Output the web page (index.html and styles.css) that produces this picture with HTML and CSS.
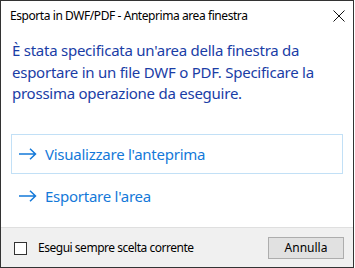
FILE: index.html
```html
<!DOCTYPE html>
<html lang="it">
<head>
    <meta charset="UTF-8">
    <title>Esporta in DWF/PDF - Anteprima area finestra</title>
    <link rel="stylesheet" href="styles.css">
</head>
<body>
    <div class="dialog">
        <div class="titlebar">
            <span class="title">Esporta in DWF/PDF - Anteprima area finestra</span>
            <svg class="close" width="12" height="12" viewBox="0 0 12 12">
                <path d="M0.5 0.5 L11.5 11.5 M11.5 0.5 L0.5 11.5" stroke="#111" stroke-width="1" fill="none"/>
            </svg>
        </div>

        <div class="content">
            <p class="instruction">È stata specificata un'area della finestra da esportare in un file DWF o PDF. Specificare la prossima operazione da eseguire.</p>

            <div class="links">
                <div class="command focused">
                    <svg class="arrow" width="18" height="12" viewBox="0 0 18 12">
                        <path d="M0 6 H16.5 M11 0.7 L16.5 6 L11 11.3" stroke="#1479d9" stroke-width="1.5" fill="none"/>
                    </svg>
                    <span>Visualizzare l'anteprima</span>
                </div>
                <div class="command">
                    <svg class="arrow" width="18" height="12" viewBox="0 0 18 12">
                        <path d="M0 6 H16.5 M11 0.7 L16.5 6 L11 11.3" stroke="#1479d9" stroke-width="1.5" fill="none"/>
                    </svg>
                    <span>Esportare l'area</span>
                </div>
            </div>
        </div>

        <div class="footer">
            <label class="check">
                <span class="box"></span>
                <span>Esegui sempre scelta corrente</span>
            </label>
            <button class="cancel">Annulla</button>
        </div>
    </div>
</body>
</html>
```

FILE: styles.css
```css
body {
    margin: 0;
    background-color: white;
    font-family: "Noto Sans", "Open Sans", sans-serif;
}
.dialog {
    width: 352px;
    height: 266px;
    border: 1px solid #333;
    background-color: white;
    display: flex;
    flex-direction: column;
}
.titlebar {
    height: 30px;
    display: flex;
    align-items: center;
    justify-content: space-between;
    padding: 0 8px 0 9px;
    font-size: 12px;
    color: #000;
}
.title {
    letter-spacing: -0.43px;
    margin-top: -1px;
}
.content {
    flex: 1;
    padding: 9px 10px 0 10px;
}
.instruction {
    margin: 0 0 0 1px;
    font-size: 15px;
    line-height: 21.5px;
    color: #1a3da6;
    letter-spacing: -0.25px;
}
.links {
    margin-top: 29px;
    display: flex;
    flex-direction: column;
    gap: 2px;
}
.command {
    height: 38px;
    border: 1px solid transparent;
    display: flex;
    align-items: center;
    gap: 8px;
    padding-left: 7px;
    color: #1479d9;
    font-size: 15px;
    letter-spacing: -0.25px;
}
.command.focused {
    border-color: #c2e0f6;
}
.arrow {
    flex-shrink: 0;
}
.footer {
    height: 39px;
    background-color: #f0f0f0;
    border-top: 1px solid #dfdfdf;
    display: flex;
    align-items: center;
    justify-content: space-between;
    padding: 0 9px 0 13px;
    font-size: 12px;
}
.check {
    display: flex;
    align-items: center;
    gap: 11px;
    color: #000;
    letter-spacing: -0.48px;
}
.box {
    width: 11px;
    height: 11px;
    border: 1px solid #333;
    background-color: white;
    margin-top: 1px;
}
.cancel {
    width: 76px;
    height: 22px;
    background-color: #e1e1e1;
    border: 1px solid #adadad;
    border-radius: 0;
    font-family: "Noto Sans", "Open Sans", sans-serif;
    font-size: 12px;
    color: #000;
    padding: 0;
}
```
